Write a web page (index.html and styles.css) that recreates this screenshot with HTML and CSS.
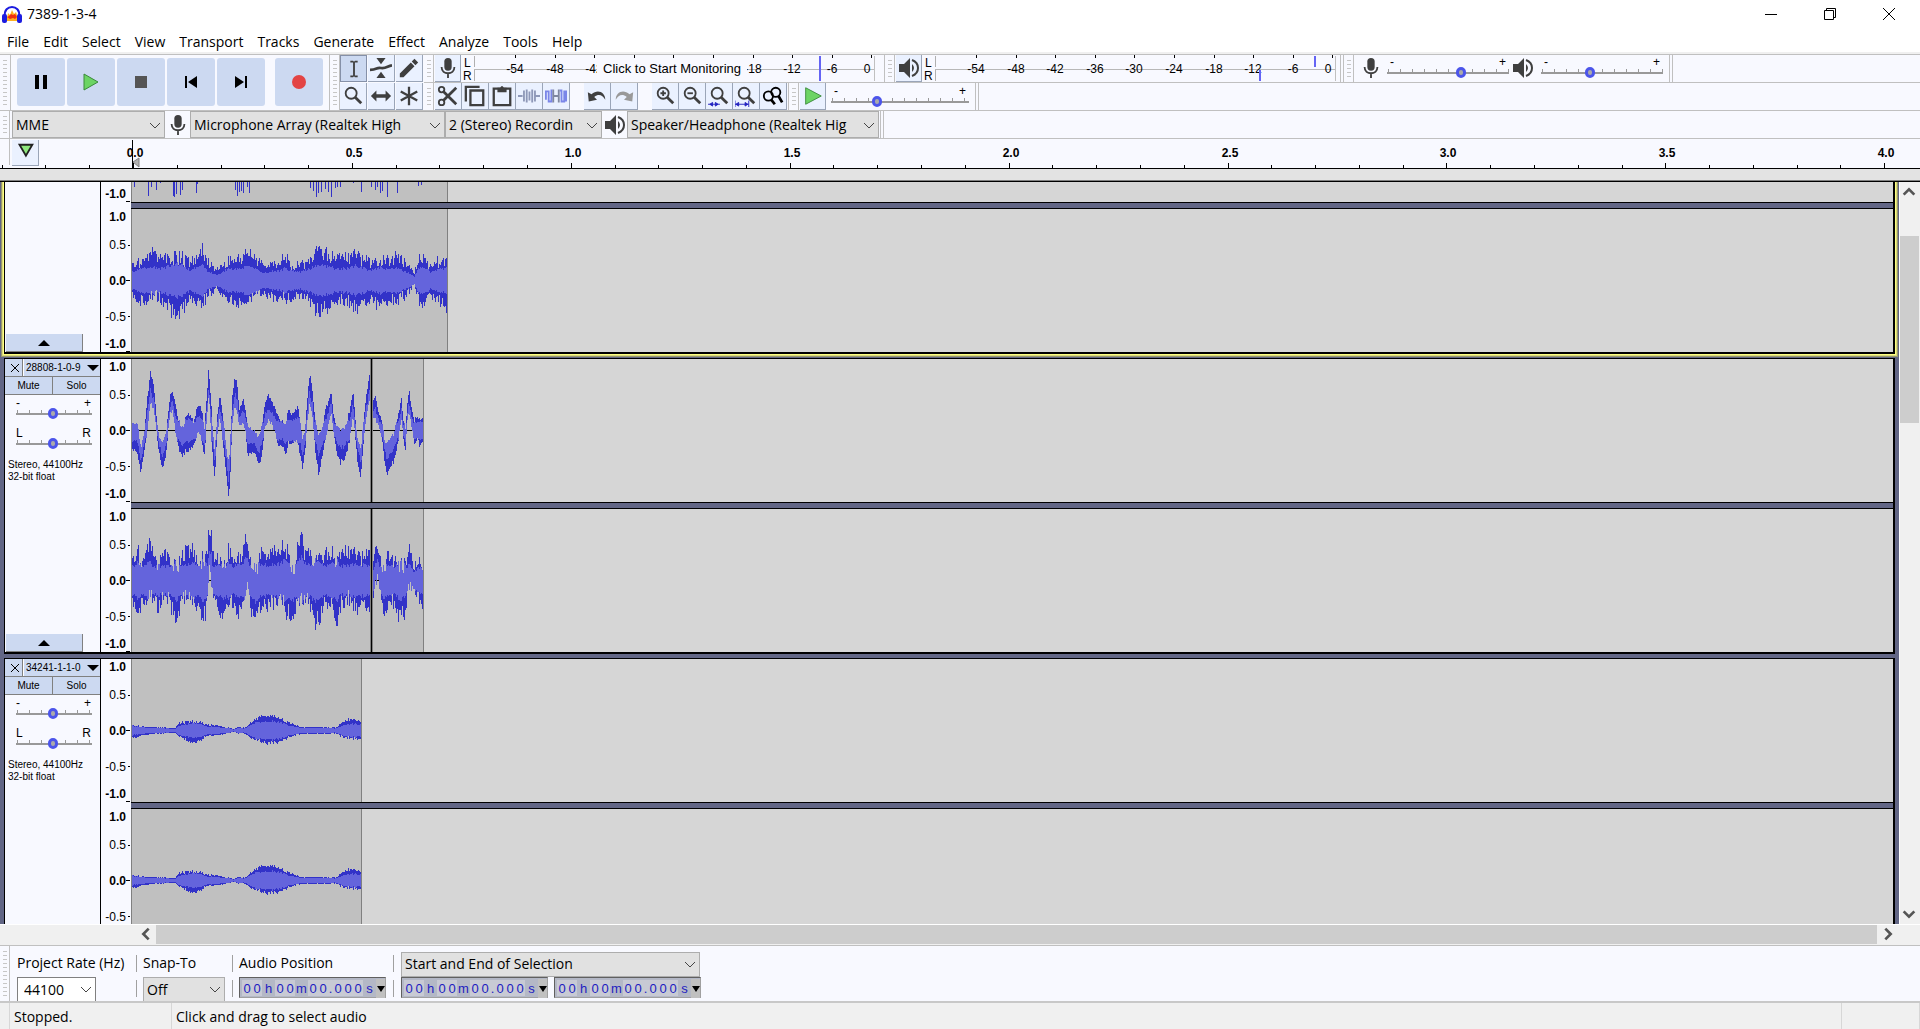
FILE: index.html
```html
<!DOCTYPE html>
<html lang="en">
<head>
<meta charset="utf-8">
<title>7389-1-3-4</title>
<link rel="stylesheet" href="styles.css">
</head>
<body>
<svg class="defs" aria-hidden="true">
  <symbol id="mic" viewBox="0 0 20 24"><rect x="6" y="1" width="8" height="14" rx="4"/><path d="M3 11c0 9 14 9 14 0M10 18v5" fill="none" stroke="currentColor" stroke-width="2"/></symbol>
  <symbol id="speaker" viewBox="0 0 22 22"><path d="M1 7h5l6-6v20l-6-6H1z"/><path d="M14 7q4 4 0 8z"/><path d="M14 3c8 3 8 13 0 16" fill="none" stroke="currentColor" stroke-width="2"/></symbol>
  <symbol id="chev" viewBox="0 0 12 12"><path d="M1 4l5 5 5-5" fill="none" stroke="#444" stroke-width="1"/></symbol>
  <symbol id="arrow" viewBox="0 0 12 12"><path d="M2 8l4-4 4 4" fill="none" stroke="#555" stroke-width="2"/></symbol>
  <symbol id="lens" viewBox="0 0 24 24"><circle cx="10" cy="9" r="6" fill="none" stroke="currentColor" stroke-width="2"/><path d="M14 13l7 7" stroke="currentColor" stroke-width="3"/></symbol>
</svg>

<header class="titlebar">
  <svg class="logo" viewBox="0 0 20 20"><path d="M5 14l1-5 2 2 2-5 2 4 2-2 2 6v3H5z" fill="#ffb020"/><path d="M5 13l2-1 2-2 2 1 2-1 2 3-2 2-2-1-3 1z" fill="#f03010"/><path d="M3 12C1 0 19 0 17 12" fill="none" stroke="#1c1ce0" stroke-width="2"/><rect x="0" y="10" width="5" height="9" rx="2" fill="#1c1ce0"/><rect x="15" y="10" width="5" height="9" rx="2" fill="#1c1ce0"/></svg>
  <h1>7389-1-3-4</h1>
  <div class="winbtns">
    <button aria-label="Minimize"><svg viewBox="0 0 12 12"><path d="M0 6.500h12"/></svg></button>
    <button aria-label="Restore"><svg viewBox="0 0 12 12"><path d="M.5 2.500h9v9h-9zM2.500 2.500v-2h9v9h-2"/></svg></button>
    <button aria-label="Close"><svg viewBox="0 0 12 12"><path d="M0 0l12 12M12 0L0 12"/></svg></button>
  </div>
</header>
<nav class="menubar">
  <button>File</button><button>Edit</button><button>Select</button><button>View</button><button>Transport</button><button>Tracks</button><button>Generate</button><button>Effect</button><button>Analyze</button><button>Tools</button><button>Help</button>
</nav>

<section class="dock">
  <div class="toolbar transport">
    <i class="grip"></i>
    <div class="big-buttons">
      <button aria-label="Pause"><svg viewBox="0 0 20 20"><path d="M4 3h4v14H4zM12 3h4v14h-4z"/></svg></button>
      <button aria-label="Play"><svg viewBox="0 0 20 20"><path d="M3 2l14 8-14 8z" fill="#6cd464" stroke="#3a8a3a"/></svg></button>
      <button aria-label="Stop"><svg viewBox="0 0 20 20"><path d="M4 4h12v12H4z" fill="#555"/></svg></button>
      <button aria-label="Skip to start"><svg viewBox="0 0 20 20"><path d="M4 4h2v12H4zM16 4v12l-9-6z"/></svg></button>
      <button aria-label="Skip to end"><svg viewBox="0 0 20 20"><path d="M14 4h2v12h-2zM4 4v12l9-6z"/></svg></button>
      <button class="record" aria-label="Record"><svg viewBox="0 0 20 20"><circle cx="10" cy="10" r="7" fill="#e34444"/></svg></button>
    </div>
  </div>
  <div class="toolbar tools">
    <i class="grip"></i>
    <div class="tool-grid">
      <button class="tool on" aria-label="Selection tool"><svg viewBox="0 0 24 24"><path d="M8 3h3l1 1 1-1h3v2h-3v14h3v2h-3l-1-1-1 1H8v-2h3V5H8z"/></svg></button>
      <button class="tool" aria-label="Envelope tool"><svg viewBox="0 0 24 24"><path d="M7 1h10l-5 7zM7 23h10l-5-7z"/><path d="M0 14c8 0 7-3 12-2s7-2 12-3" fill="none" stroke="currentColor" stroke-width="3"/></svg></button>
      <button class="tool" aria-label="Draw tool"><svg viewBox="0 0 24 24"><path d="M2 22v-4L14 6l4 4L6 22zM15 5l3-3 4 4-3 3z"/></svg></button>
      <button class="tool" aria-label="Zoom tool"><svg><use href="#lens"/></svg></button>
      <button class="tool" aria-label="Time shift tool"><svg viewBox="0 0 24 24"><path d="M1 12l6-6v4h10V6l6 6-6 6v-4H7v4z"/></svg></button>
      <button class="tool" aria-label="Multi-tool"><svg viewBox="0 0 24 24"><path d="M12 2v20M3 7l18 10M21 7L3 17" stroke="currentColor" stroke-width="2.500"/></svg></button>
    </div>
  </div>
  <div class="dock-rows">
    <div class="dock-row">
      <div class="toolbar"><i class="grip"></i><button class="tool gap" aria-label="Record meter"><svg><use href="#mic"/></svg></button><div class="meter-box"><svg class="meter" data-rec="1"></svg><button class="monitor">Click to Start Monitoring</button></div></div>
      <div class="toolbar"><i class="grip"></i><button class="tool gap" aria-label="Playback meter"><svg><use href="#speaker"/></svg></button><svg class="meter narrow"></svg></div>
      <div class="toolbar mixer"><i class="grip"></i>
        <svg class="ico"><use href="#mic"/></svg>
        <div class="slider"><span>-</span><span>+</span><input type="range" aria-label="Recording volume" min="0" max="100" value="62"></div>
        <svg class="ico"><use href="#speaker"/></svg>
        <div class="slider"><span>-</span><span>+</span><input type="range" aria-label="Playback volume" min="0" max="100" value="39"></div>
      </div>
      <i class="rest"></i>
    </div>
    <div class="dock-row">
      <div class="toolbar edit"><i class="grip"></i>
        <div class="group gap">
          <button class="tool" aria-label="Cut"><svg viewBox="0 0 24 24"><circle cx="5" cy="5" r="3" fill="none" stroke="currentColor" stroke-width="2"/><circle cx="5" cy="19" r="3" fill="none" stroke="currentColor" stroke-width="2"/><path d="M7 7l14 14M7 17L21 3" stroke="currentColor" stroke-width="3"/></svg></button>
          <button class="tool" aria-label="Copy"><svg viewBox="0 0 24 24"><path d="M7 6h14v16H7zM2 18V2h15" fill="none" stroke="currentColor" stroke-width="2.500"/></svg></button>
          <button class="tool" aria-label="Paste"><svg viewBox="0 0 24 24"><path d="M3 4h18v18H3z" fill="none" stroke="currentColor" stroke-width="2.500"/><path d="M7 3h3q2-4 4 0h3v5H7z"/></svg></button>
          <button class="tool" aria-label="Trim audio"><svg viewBox="0 0 24 24"><path d="M0 12h5M19 12h5M6.500 6v12M9.500 5v14M12.500 7v10M15.500 5v14M18.500 6v12" stroke="#8e98b8" stroke-width="2"/></svg></button>
          <button class="tool" aria-label="Silence audio"><svg viewBox="0 0 24 24"><path d="M1 16V7h3v11h3V6h1M16 6h2v12h3V7h2v11" fill="none" stroke="#7a86e8" stroke-width="2"/><path d="M8 12h8M9 5v14M15 5v14" stroke="#8088a0" stroke-width="2"/></svg></button>
        </div>
        <div class="group">
          <button class="tool" aria-label="Undo"><svg viewBox="0 0 24 24"><path d="M2 8l1 10 9-2-3-3c5-4 9-2 12 3 0-8-8-12-15-6z"/></svg></button>
          <button class="tool dim" aria-label="Redo"><svg viewBox="0 0 24 24"><path d="M22 8l-1 10-9-2 3-3c-5-4-9-2-12 3 0-8 8-12 15-6z"/></svg></button>
        </div>
        <div class="group">
          <button class="tool" aria-label="Zoom in"><svg viewBox="0 0 24 24"><use href="#lens"/><path d="M7 9h6M10 6v6" stroke="currentColor" stroke-width="2"/></svg></button>
          <button class="tool" aria-label="Zoom out"><svg viewBox="0 0 24 24"><use href="#lens"/><path d="M7 9h6" stroke="currentColor" stroke-width="2"/></svg></button>
          <button class="tool" aria-label="Fit selection"><svg viewBox="0 0 24 24"><use href="#lens"/><path d="M0 21h13M5 19v4l-3-2zM8 19v4l3-2z" stroke="#2222c0" fill="#2222c0"/></svg></button>
          <button class="tool" aria-label="Fit project"><svg viewBox="0 0 24 24"><use href="#lens"/><path d="M0 21h15M0 17v7M15 17v7M4 19v4l-3-2zM11 19v4l3-2z" stroke="#2222c0" fill="#2222c0"/></svg></button>
          <button class="tool" aria-label="Zoom toggle"><svg viewBox="0 0 24 24"><circle cx="7" cy="12" r="5" fill="none" stroke="#000" stroke-width="2"/><circle cx="15" cy="8" r="5" fill="none" stroke="#000" stroke-width="2"/><path d="M10 16l4 5M18 12l4 7" stroke="#000" stroke-width="3"/></svg></button>
        </div>
      </div>
      <div class="toolbar speed"><i class="grip"></i><button class="tool gap" aria-label="Play at speed"><svg viewBox="0 0 24 24"><path d="M4 3l17 9-17 9z" fill="#6cd464" stroke="#3a8a3a"/></svg></button>
        <div class="slider wide"><span>-</span><span>+</span><input type="range" aria-label="Playback speed" min="0" max="100" value="32"></div>
      </div>
      <i class="rest"></i>
    </div>
  </div>
</section>

<section class="devices">
  <i class="grip"></i>
  <div class="pick host"><select aria-label="Audio host"><option>MME</option></select><svg><use href="#chev"/></svg></div>
  <svg class="ico"><use href="#mic"/></svg>
  <div class="pick input"><select aria-label="Recording device"><option>Microphone Array (Realtek High</option></select><svg><use href="#chev"/></svg></div>
  <div class="pick inputs"><select aria-label="Recording channels"><option>2 (Stereo) Recordin</option></select><svg><use href="#chev"/></svg></div>
  <svg class="ico"><use href="#speaker"/></svg>
  <div class="pick output"><select aria-label="Playback device"><option>Speaker/Headphone (Realtek Hig</option></select><svg><use href="#chev"/></svg></div>
  <i class="edge"></i><i class="rest"></i>
</section>

<section class="timeline">
  <svg class="timeruler" id="timeruler"></svg>
  <button class="tool pin" aria-label="Pin play head"><svg viewBox="0 0 24 24"><path d="M6 3h14l-7 12z" fill="#8ee87e" stroke="#222" stroke-width="2"/></svg></button>
</section>
<div class="scrubber"></div>

<main class="workspace">
  <div class="viewport" id="viewport">
    <section class="track focused">
      <aside class="panel">
        <button class="collapse" aria-label="Collapse"><i class="up"></i></button>
      </aside>
      <div class="channels"><div class="channel" data-wave="a1" data-width="316"></div><div class="channel" data-wave="a2" data-width="316"></div></div>
    </section>
    <section class="track">
      <aside class="panel">
        <div class="titlerow"><button aria-label="Close track"><svg class="x" viewBox="0 0 8 8"><path d="M0 0l8 8M8 0L0 8"/></svg></button><button class="name">28808-1-0-9<i class="down"></i></button></div>
        <div class="titlerow half"><button>Mute</button><button>Solo</button></div>
        <div class="slider small"><span>-</span><span>+</span><input type="range" aria-label="Gain" min="0" max="100" value="49"></div>
        <div class="slider small"><span>L</span><span>R</span><input type="range" aria-label="Pan" min="0" max="100" value="49"></div>
        <p>Stereo, 44100Hz<br>32-bit float</p>
        <button class="collapse" aria-label="Collapse"><i class="up"></i></button>
      </aside>
      <div class="channels"><div class="channel" data-wave="b1" data-width="292" data-cut="239"></div><div class="channel" data-wave="b2" data-width="292" data-cut="239"></div></div>
    </section>
    <section class="track">
      <aside class="panel">
        <div class="titlerow"><button aria-label="Close track"><svg class="x" viewBox="0 0 8 8"><path d="M0 0l8 8M8 0L0 8"/></svg></button><button class="name">34241-1-1-0<i class="down"></i></button></div>
        <div class="titlerow half"><button>Mute</button><button>Solo</button></div>
        <div class="slider small"><span>-</span><span>+</span><input type="range" aria-label="Gain" min="0" max="100" value="49"></div>
        <div class="slider small"><span>L</span><span>R</span><input type="range" aria-label="Pan" min="0" max="100" value="49"></div>
        <p>Stereo, 44100Hz<br>32-bit float</p>
        <button class="collapse" aria-label="Collapse"><i class="up"></i></button>
      </aside>
      <div class="channels"><div class="channel" data-wave="c1" data-width="230"></div><div class="channel" data-wave="c1" data-width="230"></div></div>
    </section>
  </div>
  <div class="vscroll"><svg><use href="#arrow"/></svg><div class="lane"><div class="thumb"></div></div><svg class="flip"><use href="#arrow"/></svg></div>
</main>
<div class="hscroll"><svg class="left"><use href="#arrow"/></svg><div class="thumb"></div><svg class="right"><use href="#arrow"/></svg></div>

<section class="selectionbar">
  <i class="grip"></i>
  <div class="field rate"><label for="rate">Project Rate (Hz)</label><div class="pick"><input id="rate" value="44100"><svg><use href="#chev"/></svg></div></div>
  <div class="field snap"><label for="snap">Snap-To</label><div class="pick"><select id="snap"><option>Off</option></select><svg><use href="#chev"/></svg></div></div>
  <div class="field pos"><span>Audio Position</span><div class="time"></div></div>
  <div class="field range"><div class="pick"><select aria-label="Selection mode"><option>Start and End of Selection</option></select><svg><use href="#chev"/></svg></div><div class="pair"><div class="time"></div><div class="time"></div></div></div>
</section>
<footer class="status"><span class="state">Stopped.</span><span class="hint">Click and drag to select audio</span><span class="last"></span></footer>
<script src="app.js"></script>
</body>
</html>
```
FILE: styles.css
```css
* { box-sizing: border-box; }
html, body { height: 100%; }
body { margin: 0; display: flex; flex-direction: column; overflow: hidden; background: #f8f9ff; color: #000; font: 14px/20px "Open Sans", "Noto Sans", sans-serif; }
button, input, select { font: inherit; color: inherit; margin: 0; padding: 0; border: 0; background: none; border-radius: 0; }
svg { display: block; color: #3f3f3f; fill: currentColor; }
.defs { position: absolute; top: 0; width: 0; height: 0; }

.titlebar { flex: none; display: flex; align-items: center; height: 28px; background: #fff; padding-left: 2px; }
.titlebar h1 { margin: 0 auto 0 5px; font-size: 14px; font-weight: 400; }
.logo { width: 20px; height: 20px; }
.winbtns { display: flex; }
.winbtns button { width: 59px; height: 28px; display: grid; place-items: center; }
.winbtns button:last-child { margin-right: 2px; }
.winbtns svg { width: 12px; height: 12px; fill: none; stroke: #000; }
.menubar { flex: none; display: flex; gap: 14px; height: 26px; padding: 3px 7px 0; background: #fff; border-bottom: 2px solid #f0f0f0; }
.menubar button { height: 21px; line-height: 21px; }

.dock { flex: none; display: flex; border-top: 1px solid #c0c0c0; background: #f8f9ff; }
.toolbar { display: flex; border-right: 1px solid #c0c0c0; flex: none; }
.grip { flex: none; width: 10px; border-right: 1px solid #c0c0c0; background: repeating-linear-gradient(#c6c6c6 0 1px, transparent 1px 4px) 3px 5px / 4px calc(100% - 10px) no-repeat; }
.transport { height: 56px; border-bottom: 1px solid #c0c0c0; }
.transport .grip { width: 11px; }
.big-buttons { display: flex; gap: 2px; padding: 3px 6px 0; }
.big-buttons button { width: 48px; height: 48px; background: #ccd9f1; border-radius: 3px; display: grid; place-items: center; }
.big-buttons .record { margin-left: 8px; }
.big-buttons svg { width: 20px; height: 20px; color: #000; }
.tools { border-right: 0; border-bottom: 1px solid #c0c0c0; }
.tool-grid { display: grid; grid-template-columns: repeat(3, 27px); gap: 1px; width: 84px; }
.tool { flex: none; width: 27px; height: 27px; background: #eaf1ff; border-right: 1px solid #9aa5b8; border-bottom: 1px solid #9aa5b8; display: grid; place-items: center; }
.tool svg { width: 22px; height: 22px; }
.tool.on { background: #ccd9f1; border: 1px solid #8590a8; }
.tool.dim svg { color: #999; }
.gap { margin-left: 1px; }
.tool.gap { width: 26px; }
.dock-rows { flex: 1; min-width: 0; }
.dock-row { display: flex; height: 28px; border-bottom: 1px solid #c0c0c0; }
.rest { flex: 1; margin-left: 2px; border-left: 1px solid #c0c0c0; }
.meter-box { display: grid; justify-items: start; align-items: start; }
.meter-box > * { grid-area: 1 / 1; }
.meter { width: 423px; height: 27px; }
.meter.narrow { width: 418px; }
.meter text, .timeruler text, .vruler text { font: 12px "Liberation Sans", Arial, sans-serif; fill: #000; }
.timeruler text, .vruler text.b { font-weight: 700; }
.monitor { margin: 4px 0 0 136px; width: 150px; height: 19px; background: #f8f9ff; font: 13px/19px "Liberation Sans", Arial, sans-serif; white-space: nowrap; }
.mixer { margin-left: 2px; border-left: 1px solid #c0c0c0; padding-right: 6px; }
.ico { flex: none; width: 22px; height: 22px; margin: 2px 2px 0 3px; }
.mixer .ico:first-of-type { margin: 2px 5px 0 6px; }
.slider { display: grid; grid-template-columns: 1fr 1fr; width: 122px; height: 24px; align-content: start; font: 12px/14px "Liberation Sans", Arial, sans-serif; }
.mixer .slider:last-child { margin-left: 5px; }
.slider span { padding: 0 3px; height: 12px; }
.slider span + span { text-align: right; }
.slider input { grid-column: 1 / 3; width: 100%; height: 11px; appearance: none; background: linear-gradient(#999, #999) 0 5px / 100% 2px no-repeat, repeating-linear-gradient(90deg, #999 0 1px, transparent 1px 12px) 1px 2px / 100% 4px no-repeat; }
.slider input::-webkit-slider-thumb { appearance: none; width: 10px; height: 11px; border-radius: 5px; border: 3px solid #4c55ea; background: #aaa; }
.edit { width: 365px; }
.edit .group { display: flex; }
.edit .group + .group { margin-left: 14px; }
.speed { padding-right: 6px; }
.slider.wide { width: 138px; margin: 1px 0 0 5px; }

.devices { display: flex; height: 28px; flex: none; border-bottom: 1px solid #c0c0c0; }
.devices .ico { margin: 3px 1px 0 2px; }
.edge { width: 1px; margin-left: 1px; background: #c0c0c0; }
.pick { display: grid; align-items: center; flex: none; }
.pick > * { grid-area: 1 / 1; }
.pick svg { width: 12px; height: 12px; justify-self: end; margin-right: 4px; pointer-events: none; }
.pick select { width: 100%; height: 27px; appearance: none; background: #e1e1e1; border: 1px solid #adadad; padding: 0 24px 0 3px; line-height: 22px; }
.host { width: 153px; margin-left: 2px; }
.input { width: 255px; }
.inputs { width: 157px; }
.output { width: 252px; }

.timeline { display: grid; flex: none; height: 30px; border-bottom: 1px solid #000; background: #f8f9ff; }
.timeline > * { grid-area: 1 / 1; }
.timeruler { width: 100%; height: 29px; overflow: hidden; }
.pin { margin: 1px 0 0 12px; height: 26px; }
.scrubber { flex: none; height: 13px; background: #e3e3e3; border-bottom: 1px solid #000; box-shadow: inset 0 -1px #808080; }

.workspace { flex: 1; min-height: 0; display: flex; background: #626685; }
.viewport { flex: 1; min-width: 0; overflow: hidden; padding: 0 4px; display: flex; flex-direction: column; }
.track { flex: none; display: flex; margin-top: 4px; border: 1px solid #000; border-width: 1px 2px 2px 1px; background: #f8f9ff; }
.track.focused { box-shadow: 0 0 0 1px #ffff80, 0 0 0 2px #d8d87c, 0 0 0 3px #98986c; }
.panel { width: 96px; flex: none; display: flex; flex-direction: column; border-right: 1px solid #000; font: 10px/12px "Liberation Sans", Arial, sans-serif; }
.titlerow { display: flex; height: 18px; border-bottom: 1px solid #808080; background: #ccd9f1; }
.titlerow button { width: 18px; border-right: 1px solid #808080; display: flex; align-items: center; justify-content: center; }
.titlerow .name { flex: 1; justify-content: space-between; border-right: 0; padding: 0 1px 0 2px; border-left: 1px solid #fff; }
.titlerow.half button { flex: 1; }
.titlerow.half button:last-child { border-right: 0; }
.x { width: 8px; height: 8px; margin-left: 2px; stroke: #000; stroke-width: 1; }
.down { border: 6px solid transparent; border-top-color: #000; border-bottom: 0; }
.up { border: 6px solid transparent; border-bottom-color: #000; border-top: 0; }
.slider.small { width: 76px; height: 26px; margin: 1px 0 0 11px; }
.slider.small + .slider.small { margin-top: 4px; }
.slider.small span { padding: 0; height: 12px; }
.slider.small span + span { padding-right: 1px; }
.panel p { margin: 7px 0 0 3px; }
.collapse { width: 77px; height: 18px; margin: auto 0 0 1px; background: #ccd9f1; border-right: 1px solid #808080; border-bottom: 1px solid #808080; display: grid; place-items: center; }
.channels { flex: 1; min-width: 0; display: flex; flex-direction: column; }
.channel { display: flex; height: 143px; background: #d6d6d6; }
.divider { height: 7px; margin-left: 30px; background: #626685; border: 1px solid #000; border-width: 1px 0; }
.vruler { flex: none; width: 31px; height: 143px; background: #f8f9ff; border-right: 1px solid #808080; }
.clip { flex: none; height: 143px; background: #c0c0c0; border-right: 1px solid #808080; }
.wave { width: 100%; height: 143px; shape-rendering: crispEdges; }

.vscroll { width: 21px; flex: none; display: flex; flex-direction: column; background: #f0f0f0; border-left: 1px solid #fff; }
.vscroll svg { width: 16px; height: 16px; margin: 2px 1px; }
.lane { flex: 1; padding-top: 34px; }
.vscroll .thumb { height: 28%; background: #cdcdcd; margin-right: 1px; }
.flip { transform: rotate(180deg); }
.hscroll { flex: none; display: flex; align-items: stretch; height: 21px; background: #f0f0f0; border-top: 1px solid #fff; padding: 0 24px 1px 137px; }
.hscroll .thumb { flex: 1; background: #cdcdcd; }
.hscroll svg { width: 16px; height: 16px; margin: 1px 2px 0 1px; }
.hscroll .right { margin: 1px 0 0 3px; }
.left { transform: rotate(-90deg); }
.right { transform: rotate(90deg); }

.selectionbar { flex: none; display: flex; height: 58px; border-top: 1px solid #c0c0c0; border-bottom: 2px solid #c8c8c8; }
.field { display: flex; flex-direction: column; padding: 7px 6px 0 7px; line-height: 20px; background: linear-gradient(#a0a0a0, #a0a0a0) right 9px / 1px 17px no-repeat, linear-gradient(#a0a0a0, #a0a0a0) right 34px / 1px 17px no-repeat; }
.field > label, .field > span { height: 24px; white-space: nowrap; }
.rate { width: 127px; }
.snap { width: 96px; padding-left: 6px; }
.pos { width: 161px; padding-left: 6px; }
.field.range { padding: 5px 0 0 7px; background: none; }
.rate .pick, .snap .pick { width: 79px; height: 24px; overflow: hidden; }
.snap .pick { width: 82px; }
.rate input { width: 100%; height: 24px; background: #fff; border: 1px solid #808080; border-bottom: 0; padding-left: 6px; }
.snap select { height: 24px; border-bottom: 0; }
.range .pick { width: 299px; height: 26px; }
.range .pick select { height: 25px; }
.pair { display: flex; gap: 6px; }
.time { display: flex; width: 147px; height: 21px; background: #b4b8c6; border: 1px solid #a0a0a0; border-top-color: #606060; border-left-color: #606060; padding: 2px 0 1px 2px; color: #1c1cc0; font: 13px/17px "Liberation Sans", Arial, sans-serif; }
.time span { flex: 1 1 0; text-align: center; }
.time .d { flex: none; width: 10px; background: #c8cad4; }
.time .dot { flex: none; width: 5px; background: #c8cad4; }
.time button { width: 9px; height: 19px; margin: -1px 0; background: #c0c0c0; display: grid; place-items: center; }
.time i { border: 4px solid transparent; border-top: 6px solid #000; border-bottom: 0; }

.status { flex: none; display: flex; height: 26px; padding-left: 9px; background: #f0f0f0; line-height: 28px; }
.status span { border-left: 1px solid #d7d7d7; padding-left: 4px; overflow: hidden; }
.state { width: 162px; }
.hint { flex: 1; }
.last { width: 79px; border-right: 1px solid #d7d7d7; }
```
FILE: app.js
```js
var line = function (x1, y1, x2, y2, c, w) {
  return '<path d="M' + x1 + ' ' + y1 + 'L' + x2 + ' ' + y2 + '" stroke="' + (c || '#000') + '" stroke-width="' + (w || 1) + '"/>';
};

// Time ruler: one major tick each half second, five minor steps between.
(function () {
  var zero = 134, step = 43.78, out = '';
  for (var i = -3; i <= 40; i++) {
    var x = Math.round(zero + i * step) - 0.5;
    var major = i % 5 === 0;
    out += line(x, major ? 24 : 26, x, 29);
    if (major && i >= 0) out += '<text x="' + (x + 1.5) + '" y="18" text-anchor="middle">' + (i / 10).toFixed(1) + '</text>';
  }
  out += line(9.5, 0, 9.5, 26, '#c0c0c0');
  out += '<path d="M139 19v9l-6-5z" fill="#b0b0b0" stroke="#808080"/>' + line(132.5, 1, 132.5, 29);
  document.getElementById('timeruler').innerHTML = out;
})();

document.querySelectorAll('.meter').forEach(function (m) {
  var rec = m.dataset.rec, out = '';
  out += '<text x="3" y="12">L</text><text x="2" y="25">R</text>';
  out += line(13.5, 1, 13.5, 12, '#b0b0b0') + line(13.5, 14, 13.5, 26, '#b0b0b0') + line(13, 14.5, 414, 14.5, '#b8b8b8') + line(413.5, 1, 413.5, 26, '#c0c0c0');
  for (var i = 0; i < 10; i++) {
    var x = Math.round(54 + i * 39.6);
    out += line(x + 0.5, 0, x + 0.5, 3);
    // The monitoring button covers the middle of the recording scale.
    if (rec && i > 2 && i < 6) continue;
    out += '<text x="' + (i === 9 ? x - 4 : x) + '" y="18" text-anchor="middle">' + (i === 9 ? 0 : i * 6 - 54) + '</text>';
  }
  out += rec ? line(359, 1, 359, 26, '#6464f4', 2) : line(393, 1, 393, 12, '#6464f4', 2) + line(338, 15, 338, 26, '#6464f4', 2);
  m.innerHTML = out;
});

// Envelopes: flat triples of x, maximum and minimum, three units to a pixel.
var waves = {
  a2: { zero: 331, jit: 0.5, rms: 2.2, pts: [396,270,385,430,254,415,455,232,390,490,245,415,527,232,458,545,240,445,570,260,398,590,235,412,605,215,428,618,256,394,650,292,358,680,256,408,715,252,415,748,226,398,790,278,384,830,270,398,853,240,400,875,275,404,900,272,382,930,254,414,950,226,446,985,230,430,1010,250,404,1040,245,408,1068,235,438,1110,264,398,1140,246,434,1165,256,404,1190,240,408,1220,272,385,1242,302,352,1255,244,414,1275,242,414,1290,278,388,1312,258,400,1341,264,432] },
  b1: { zero: 241, jit: 0.3, rms: 1.7, pts: [396,215,304,410,210,304,422,288,376,432,240,300,440,145,250,450,60,165,460,105,180,468,195,250,476,260,312,486,270,358,496,250,325,503,190,250,510,124,190,517,120,185,525,160,250,535,205,298,545,230,330,555,200,310,567,180,310,580,210,288,592,155,252,602,165,268,612,225,325,618,150,230,625,46,135,631,130,250,637,240,320,643,290,395,650,200,260,658,130,200,666,180,270,673,240,340,680,300,405,685,335,450,690,250,380,696,130,220,702,82,180,709,80,180,716,180,230,728,137,220,735,180,242,742,220,320,752,230,310,764,240,315,776,255,358,785,220,315,793,160,235,803,126,215,815,155,228,825,174,255,835,195,295,845,208,290,855,215,315,865,172,285,875,185,285,885,166,280,895,172,295,906,265,356,914,230,310,920,150,230,928,64,160,936,115,210,944,205,300,954,255,380,964,235,330,975,175,275,985,145,218,992,112,190,998,185,240,1008,224,305,1020,236,345,1035,226,325,1045,184,290,1052,155,242,1058,116,200,1064,200,260,1072,270,345,1081,290,392,1088,220,300,1096,145,210,1107,76,150,1119,145,205,1125,136,212,1135,185,232,1145,206,275,1152,265,336,1160,280,378,1168,255,356,1180,245,340,1190,205,295,1203,144,215,1208,200,260,1215,235,304,1220,165,220,1226,112,190,1232,165,225,1242,205,294,1250,190,268,1258,205,295,1269,190,265] },
  b2: { zero: 241, jit: 0.55, rms: 2, pts: [396,156,328,413,124,345,425,174,335,448,98,302,460,160,315,475,165,358,487,138,302,500,145,320,505,144,320,528,176,386,545,148,322,555,128,315,580,118,322,598,174,352,606,154,386,617,145,356,622,120,290,626,56,242,632,70,255,636,130,275,645,150,325,670,168,374,683,122,335,700,160,335,716,154,362,735,100,295,742,118,244,750,162,345,765,178,386,785,138,345,810,144,335,840,120,315,851,108,345,866,144,378,880,184,376,898,90,315,904,80,315,910,124,325,928,134,334,942,170,392,955,160,384,975,142,322,994,122,334,1007,170,392,1025,142,326,1045,130,316,1070,148,352,1090,145,336,1109,148,334,1119,160,304,1130,112,244,1140,145,304,1150,195,386,1165,136,314,1185,168,334,1198,170,380,1215,170,354,1227,122,274,1240,186,294,1255,160,314,1269,178,330] },
  c1: { zero: 241, jit: 0.3, rms: 1.6, pts: [396,224,265,430,229,254,460,231,251,500,233,249,525,234,248,535,217,260,570,210,280,600,212,276,615,222,260,650,225,255,690,234,248,700,239,243,710,231,249,735,233,249,750,215,264,770,198,277,800,193,284,840,198,279,855,212,268,880,220,258,900,231,251,960,231,251,1010,232,249,1020,219,259,1045,204,266,1080,212,270] }
};
// Lowest sample of each peak that reaches the foot of the first channel.
var peaks = [403,50,445,78,452,50,469,60,481,40,518,77,523,80,528,72,540,75,547,60,589,68,592,42,706,60,712,77,717,65,724,62,730,70,742,50,747,70,930,55,938,62,948,80,953,70,962,66,975,58,984,66,994,80,1004,55,1012,50,1019,50,1060,40,1083,66,1112,52,1124,60,1130,50,1139,68,1145,64,1162,80,1190,68,1255,48,1263,44];

function noise(n) { var s = Math.sin(n * 12.9898 + 4.1) * 43758.5453; return s - Math.floor(s); }

function drawWave(id, width, cut) {
  var dark = '', light = '', i, x;
  if (id === 'a1') {
    for (i = 0; i < peaks.length; i += 2) {
      x = Math.round((peaks[i] - 396) / 3) + 0.5;
      dark += 'M' + x + ' 60V' + Math.round(peaks[i + 1] / 3 + 111);
    }
    return '<path d="' + dark + '" stroke="#3232c8"/>';
  }
  var w = waves[id], p = w.pts, k = 0;
  for (x = 0; x < width - 1; x++) {
    if (cut && x >= cut - 1 && x <= cut + 1) continue;
    var u = 396 + x * 3;
    while (k + 5 < p.length && p[k + 3] < u) k += 3;
    var t = k + 5 < p.length ? Math.max(0, Math.min(1, (u - p[k]) / (p[k + 3] - p[k]))) : 0;
    var n = k + 5 < p.length ? k + 3 : k;
    var hi = (w.zero - (p[k + 1] + (p[n + 1] - p[k + 1]) * t)) / 3;
    var lo = (w.zero - (p[k + 2] + (p[n + 2] - p[k + 2]) * t)) / 3;
    var mid = (hi + lo) / 2, half = (hi - lo) / 2;
    var rms = Math.sqrt(mid * mid + half * half / w.rms / w.rms) * (0.8 + 0.25 * noise(x + 900));
    var top = mid + half * (1 - w.jit * noise(x));
    var bot = mid - half * (1 - w.jit * noise(x + 500));
    dark += 'M' + (x + 0.5) + ' ' + Math.round(71 - top) + 'V' + Math.round(72 - bot);
    var lt = Math.min(top, rms), lb = Math.max(bot, -rms);
    if (lt > lb) light += 'M' + (x + 0.5) + ' ' + Math.round(71 - lt) + 'V' + Math.round(72 - lb);
  }
  return line(0, 71.5, width, 71.5) + '<path d="' + dark + '" stroke="#3232c8"/><path d="' + light + '" stroke="#6464dc"/>' +
    (cut ? line(cut + 0.5, 0, cut + 0.5, 143, '#808080', 3) + line(cut + 0.5, 0, cut + 0.5, 143) : '');
}

document.querySelectorAll('.channel').forEach(function (c) {
  var marks = [['1.0', 12, 1], ['0.5', 40, 0], ['0.0', 76, 1], ['-0.5', 112, 0], ['-1.0', 139, 1]];
  var r = marks.map(function (m) {
    return '<text x="25" y="' + m[1] + '" text-anchor="end"' + (m[2] ? ' class="b"' : '') + '>' + m[0] + '</text>';
  }).join('');
  r += line(27, 36.5, 29, 36.5) + line(25, 71.5, 29, 71.5) + line(27, 107.5, 29, 107.5) + line(25, 142.5, 29, 142.5);
  var cut = +c.dataset.cut || 0, width = +c.dataset.width;
  c.innerHTML = '<svg class="vruler">' + r + '</svg><div class="clip" style="width:' + width + 'px"><svg class="wave">' + drawWave(c.dataset.wave, width, cut) + '</svg></div>';
  if (c.nextElementSibling) c.insertAdjacentHTML('afterend', '<div class="divider"></div>');
});

document.querySelectorAll('.time').forEach(function (t) {
  t.innerHTML = '00h00m00.000s'.split('').map(function (ch) {
    return '<span class="' + (ch === '.' ? 'dot' : /\d/.test(ch) ? 'd' : 'u') + '">' + ch + '</span>';
  }).join('') + '<button aria-label="Time format"><i></i></button>';
});

document.getElementById('viewport').scrollTop = 128;
```
